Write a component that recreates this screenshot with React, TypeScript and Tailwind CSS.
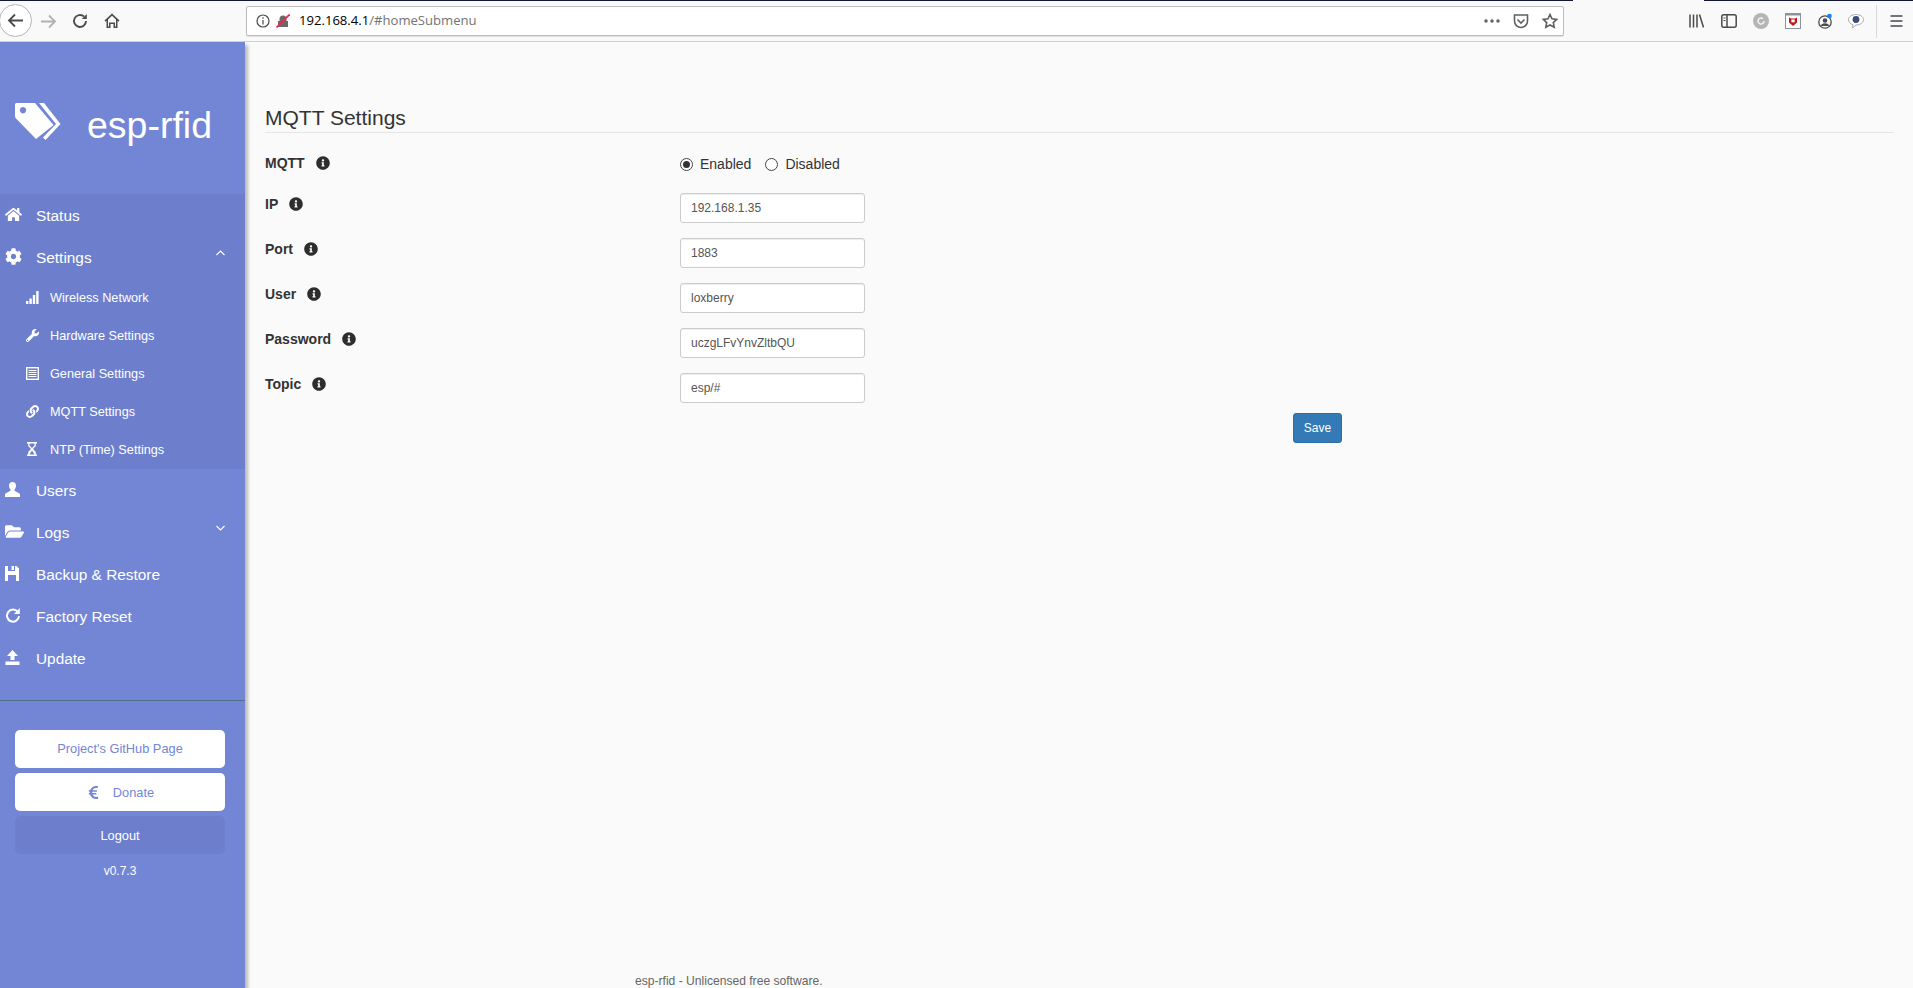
import type { ReactNode } from 'react'
import { FaCog, FaEuroSign, FaFolderOpen, FaHome, FaInfoCircle, FaLink, FaWrench } from 'react-icons/fa'

const TagsLogo = () => (
  <svg width="46" height="38" viewBox="0 0 46 38" fill="currentColor">
    <path
      fillRule="evenodd"
      d="M0 2.500Q0 1 1.500 1H20L38.500 23 21 37 1 16.500Q0 15.500 0 14zM8 5a3.200 3.200 0 1 0 .01 0z"
    />
    <path d="M24 1h5l16.500 21L30.500 38l-2.500-2.500L41 22z" />
  </svg>
)

const SignalIcon = () => (
  <svg width="13" height="13" viewBox="0 0 13 13" fill="currentColor">
    <rect x="0" y="10" width="2.400" height="3" />
    <rect x="3.400" y="7.500" width="2.400" height="5.500" />
    <rect x="6.800" y="4" width="2.400" height="9" />
    <rect x="10.200" y="0" width="2.400" height="13" />
  </svg>
)

const ListIcon = () => (
  <svg width="13" height="13" viewBox="0 0 13 13" fill="none" stroke="currentColor">
    <rect x="0.700" y="0.700" width="11.600" height="11.600" strokeWidth="1.400" />
    <path d="M2.500 3.500h8M2.500 5.500h8M2.500 7.500h8M2.500 9.500h8" strokeWidth="1" />
  </svg>
)

const HourglassIcon = () => (
  <svg width="12" height="14" viewBox="0 0 12 14" fill="currentColor">
    <path
      fillRule="evenodd"
      d="M1 0h10v1.500H9.800V4L7 7l2.800 3v2.500H11V14H1v-1.500h1.200V10L5 7 2.200 4V1.500H1zM3.500 1.500V3.500L6 6l2.500-2.500v-2zM3.500 12.500h5L6 8.500z"
    />
  </svg>
)

const UserIcon = () => (
  <svg width="15" height="15" viewBox="0 0 15 15" fill="currentColor">
    <path d="M7.500 0C5.300 0 4 1.600 4 3.800c0 1.500.6 2.900 1.500 3.700v1.300L0.500 11.500C0 11.800 0 12.500 0 13v2h15v-2c0-.5 0-1.200-.5-1.500l-5-2.700V7.500c.9-.8 1.500-2.200 1.500-3.700C11 1.600 9.700 0 7.500 0z" />
  </svg>
)

const FloppyIcon = () => (
  <svg width="14" height="15" viewBox="0 0 14 15" fill="currentColor">
    <path
      fillRule="evenodd"
      d="M0 0h3v5h7V0h1.500L14 2.500V15H0zM3 9v6h8V9zM6.500 0h2.500v4H6.500z"
    />
  </svg>
)

const RepeatIcon = () => (
  <svg width="15" height="16" viewBox="0 0 15 16" fill="none" stroke="currentColor" strokeWidth="2">
    <path d="M12.800 5A6 6 0 1 0 14 9" />
    <path d="M14.800 1v6H9z" fill="currentColor" stroke="none" />
  </svg>
)

const UploadIcon = () => (
  <svg width="15" height="15" viewBox="0 0 15 15" fill="currentColor">
    <path d="M7.500 0L13 6H9.500v4h-4V6H2z" />
    <rect x="0.500" y="11.500" width="14" height="3.500" />
  </svg>
)

const ChevronIcon = ({ up }: { up?: boolean }) => (
  <svg
    width="9"
    height="6"
    viewBox="0 0 9 6"
    fill="none"
    stroke="currentColor"
    strokeWidth="1.100"
    className="mr-[20px] mb-[10px]"
  >
    <path d={up ? 'M0.500 5L4.500 1l4 4' : 'M0.500 1l4 4 4-4'} />
  </svg>
)

function TopStrip() {
  return (
    <div className="flex h-px">
      <div className="w-[1573px] bg-[#14163a]" />
      <div className="w-[131px] bg-[#f9f9fa]" />
      <div className="flex-1 bg-[#14163a]" />
    </div>
  )
}

function BrowserBar() {
  return (
    <div className="relative flex h-[41px] items-center border-b border-[#d0d0d0] bg-[#f9f9fa] font-['Open_Sans',sans-serif] text-[#4a4a4f]">
      <div className="absolute left-[-1px] top-[3px] flex h-[33px] w-[33px] items-center justify-center rounded-full border border-[#b5b5b5] bg-white">
        <svg width="17" height="15" viewBox="0 0 17 15" fill="none" stroke="#4a4a4f" strokeWidth="1.800">
          <path d="M16 7.500H2M8 1.500l-6 6 6 6" />
        </svg>
      </div>
      <div className="ml-[40px] flex w-[206px] items-center">
        <svg width="17" height="15" viewBox="0 0 17 15" fill="none" stroke="#b1b1b3" strokeWidth="1.800">
          <path d="M1 7.500h14M9 1.500l6 6-6 6" />
        </svg>
        <svg className="ml-[15px]" width="16" height="16" viewBox="0 0 16 16" fill="none" stroke="#4a4a4f" strokeWidth="1.900">
          <path d="M14 8a6 6 0 1 1-2-4.500" />
          <path d="M14.800 1v5h-5" fill="#4a4a4f" stroke="none" />
        </svg>
        <svg className="ml-[16px]" width="16" height="16" viewBox="0 0 16 16" fill="#4a4a4f">
          <path d="M8 0.500L0.500 7.500l1 1.200L2.500 7.800V15h4v-4h3v4h4V7.800l1 .9 1-1.200zM4 13.500V6.500l4-3.800 4 3.800v7h-1v-4H5v4z" />
        </svg>
      </div>
      <div className="flex h-[30px] w-[1318px] items-center rounded-[2px] border border-[#bdbdbd] bg-white shadow-[0_1px_1px_rgba(0,0,0,0.1)]">
        <svg className="ml-[9px]" width="14" height="14" viewBox="0 0 14 14" fill="none" stroke="#4a4a4f" strokeWidth="1.200">
          <circle cx="7" cy="7" r="6" />
          <path d="M7 6v4.500M7 3.200v1.500" />
        </svg>
        <svg className="ml-[6px]" width="14" height="14" viewBox="0 0 14 14">
          <path d="M2 13V7h1.500V5a3.500 3.500 0 0 1 7 0v2H12v6z" fill="#6a6a6a" />
          <path d="M0.500 13.500L13.500 0.500" stroke="#f02550" strokeWidth="1.800" />
        </svg>
        <span className="ml-[9px] text-[13.100px] leading-none text-black">
          192.168.4.1<span className="text-[#737373]">/#homeSubmenu</span>
        </span>
        <div className="ml-auto mr-[5px] flex items-center gap-[13px]">
          <svg width="16" height="4" viewBox="0 0 16 4" fill="#5f5f5f">
            <circle cx="2" cy="2" r="1.700" />
            <circle cx="8" cy="2" r="1.700" />
            <circle cx="14" cy="2" r="1.700" />
          </svg>
          <svg width="16" height="15" viewBox="0 0 16 15" fill="none" stroke="#5f5f5f" strokeWidth="1.600">
            <path d="M1.500 1h13v6a6.500 6.500 0 0 1-13 0z" />
            <path d="M4.500 5.500L8 9l3.500-3.500" />
          </svg>
          <svg width="16" height="16" viewBox="0 0 16 16" fill="none" stroke="#5f5f5f" strokeWidth="1.600">
            <path d="M8 1.500l2 4.300 4.700.6-3.400 3.200.9 4.700L8 12l-4.200 2.300.9-4.700L1.300 6.400 6 5.800z" />
          </svg>
        </div>
      </div>
      <div className="ml-[125px] flex items-center">
        <svg width="15" height="14" viewBox="0 0 15 14" fill="none" stroke="#4a4a4f" strokeWidth="1.500">
          <path d="M1 0.500v13M4.500 0.500v13M8 0.500v13M10.500 0.500l4 13" />
        </svg>
        <svg className="ml-[17px]" width="16" height="14" viewBox="0 0 16 14" fill="none" stroke="#4a4a4f" strokeWidth="1.500">
          <rect x="0.800" y="0.800" width="14.400" height="12.400" rx="2" />
          <path d="M6 1v12" />
          <path d="M2.500 4h2M2.500 6.500h2" strokeWidth="1" />
        </svg>
        <svg className="ml-[16px]" width="16" height="16" viewBox="0 0 16 16">
          <circle cx="8" cy="8" r="8" fill="#b5b5b5" />
          <path d="M11 8a3 3 0 1 1-1-2.200" fill="none" stroke="#f2f2f2" strokeWidth="1.500" />
        </svg>
        <svg className="ml-[16px]" width="16" height="16" viewBox="0 0 16 16">
          <rect x="0.500" y="0.500" width="15" height="15" fill="#fff" stroke="#8a949c" />
          <rect x="0.500" y="0.500" width="15" height="2" fill="#8a949c" />
          <path d="M4 4.500l2 1h4l2-1v5L8 13 4 9.500z" fill="#c01818" />
          <rect x="6.300" y="6.500" width="3.400" height="2.800" fill="#fff" />
        </svg>
        <svg className="ml-[16px]" width="16" height="16" viewBox="0 0 16 16">
          <circle cx="8" cy="9" r="6.200" fill="none" stroke="#4a4a4f" strokeWidth="1.300" />
          <circle cx="8" cy="7.500" r="2.300" fill="#4a4a4f" />
          <path d="M3.800 13a4.300 3.600 0 0 1 8.400 0z" fill="#4a4a4f" />
          <circle cx="12.500" cy="3" r="2.300" fill="#0a84ff" />
        </svg>
        <svg className="ml-[15px]" width="16" height="16" viewBox="0 0 16 16">
          <path d="M8 1.500c4 0 7.500 2.300 7.500 5.200S12 12 8 12l-3.500 3 .5-3.300C2.500 11 .5 9 .5 6.700.5 3.800 4 1.500 8 1.500z" fill="#fff" stroke="#a8a8a8" />
          <circle cx="8" cy="6.500" r="3.400" fill="#3d4a78" />
        </svg>
        <div className="ml-[12px] h-[33px] w-px bg-[#d8d8d8]" />
        <svg className="ml-[13px]" width="13" height="12" viewBox="0 0 13 12" fill="none" stroke="#4a4a4f" strokeWidth="1.500">
          <path d="M0.500 1h12M0.500 6h12M0.500 11h12" />
        </svg>
      </div>
    </div>
  )
}

function NavItem({ icon, label, chevron }: { icon: ReactNode; label: string; chevron?: 'up' | 'down' }) {
  return (
    <div className="flex h-[42px] items-center text-[15.400px] text-white">
      <span className="flex w-[36px] items-center justify-start pb-[4px] pl-[5px] text-[17px]">{icon}</span>
      <span>{label}</span>
      {chevron && (
        <span className="ml-auto flex">
          <ChevronIcon up={chevron === 'up'} />
        </span>
      )}
    </div>
  )
}

function SubItem({ icon, label }: { icon: ReactNode; label: string }) {
  return (
    <div className="flex h-[38px] items-center text-[12.700px] text-white">
      <span className="flex w-[50px] items-center pb-[2px] pl-[26px] text-[13px]">{icon}</span>
      <span className="pt-[2px]">{label}</span>
    </div>
  )
}

function Sidebar() {
  return (
    <aside className="relative z-10 w-[245px] shrink-0 bg-[#7386d5] shadow-[3px_3px_3px_rgba(0,0,0,0.25)]">
      <div className="flex h-[152px] items-start pl-[15px] text-white">
        <span className="mt-[60px]">
          <TagsLogo />
        </span>
        <span className="ml-[26px] mt-[65px] text-[37.500px] leading-none">esp-rfid</span>
      </div>
      <div className="bg-[#6d7fcc] pt-[1px]">
        <NavItem icon={<FaHome />} label="Status" />
        <NavItem icon={<FaCog />} label="Settings" chevron="up" />
        <SubItem icon={<SignalIcon />} label="Wireless Network" />
        <SubItem icon={<FaWrench />} label="Hardware Settings" />
        <SubItem icon={<ListIcon />} label="General Settings" />
        <SubItem icon={<FaLink />} label="MQTT Settings" />
        <SubItem icon={<HourglassIcon />} label="NTP (Time) Settings" />
      </div>
      <div className="pt-[1px]">
        <NavItem icon={<UserIcon />} label="Users" />
        <NavItem icon={<FaFolderOpen className="text-[19px]" />} label="Logs" chevron="down" />
        <NavItem icon={<FloppyIcon />} label="Backup & Restore" />
        <NavItem icon={<RepeatIcon />} label="Factory Reset" />
        <NavItem icon={<UploadIcon />} label="Update" />
      </div>
      <div className="mt-[20px] border-t border-[#47748b]" />
      <div className="flex flex-col items-center gap-[5px] pl-[15px] pr-[20px] pt-[29px] text-[12.800px]">
        <div className="flex h-[38px] w-full items-center justify-center rounded-[5px] bg-white text-[#7386d5]">
          Project's GitHub Page
        </div>
        <div className="flex h-[38px] w-full items-center justify-center rounded-[5px] bg-white pt-[1px] text-[#7386d5]">
          <FaEuroSign className="mr-[12px] text-[15px]" />
          Donate
        </div>
        <div className="flex h-[38px] w-full items-center justify-center rounded-[5px] bg-[#6d7fcc] pt-[1px] text-white">
          Logout
        </div>
        <div className="mt-[3px] text-[12px] text-white">v0.7.3</div>
      </div>
    </aside>
  )
}

function FieldLabel({ label }: { label: string }) {
  return (
    <div className="flex w-[415px] shrink-0 items-center text-[14px] font-bold leading-[20px] text-[#333]">
      {label}
      <FaInfoCircle className="ml-[11px] text-[14px] text-[#2d2d2d]" />
    </div>
  )
}

function TextRow({ label, value }: { label: string; value: string }) {
  return (
    <div className="flex h-[45px] items-start">
      <div className="pt-[1px]">
        <FieldLabel label={label} />
      </div>
      <input
        readOnly
        value={value}
        className="h-[30px] w-[185px] rounded-[3px] border border-[#ccc] bg-white px-[10px] text-[12px] text-[#555] shadow-[inset_0_1px_1px_rgba(0,0,0,0.075)] outline-none"
      />
    </div>
  )
}

function Radio({ label, checked }: { label: string; checked?: boolean }) {
  return (
    <span className="flex items-center text-[14px] text-[#333]">
      <span className="mr-[7px] flex h-[13px] w-[13px] items-center justify-center rounded-full border border-[#444] bg-white">
        {checked && <span className="h-[7px] w-[7px] rounded-full bg-[#333]" />}
      </span>
      {label}
    </span>
  )
}

function MainPanel() {
  return (
    <main className="flex min-w-0 flex-1 flex-col bg-[#fafafa] pl-[20px] pr-[19px]">
      <h2 className="mt-[63px] border-b border-[#e5e5e5] pb-[1px] text-[21px] font-normal leading-[26px] text-[#333]">
        MQTT Settings
      </h2>
      <div className="flex h-[60px] items-start pt-[20px]">
        <FieldLabel label="MQTT" />
        <div className="flex items-center gap-[14px] pt-[1px]">
          <Radio label="Enabled" checked />
          <Radio label="Disabled" />
        </div>
      </div>
      <TextRow label="IP" value="192.168.1.35" />
      <TextRow label="Port" value="1883" />
      <TextRow label="User" value="loxberry" />
      <TextRow label="Password" value="uczgLFvYnvZltbQU" />
      <TextRow label="Topic" value="esp/#" />
      <div className="ml-[1028px] mt-[-5px] flex h-[30px] w-[49px] items-center justify-center rounded-[3px] border border-[#2e6da4] bg-[#337ab7] text-[12px] text-white">
        Save
      </div>
      <div className="mt-auto ml-[370px] text-[12.100px] leading-[14px] text-[#666]">
        esp-rfid - Unlicensed free software.
      </div>
    </main>
  )
}

export default function App() {
  return (
    <div className="flex h-[988px] w-[1913px] flex-col overflow-hidden font-['Liberation_Sans',Arial,sans-serif]">
      <TopStrip />
      <BrowserBar />
      <div className="flex min-h-0 flex-1">
        <Sidebar />
        <MainPanel />
      </div>
    </div>
  )
}
